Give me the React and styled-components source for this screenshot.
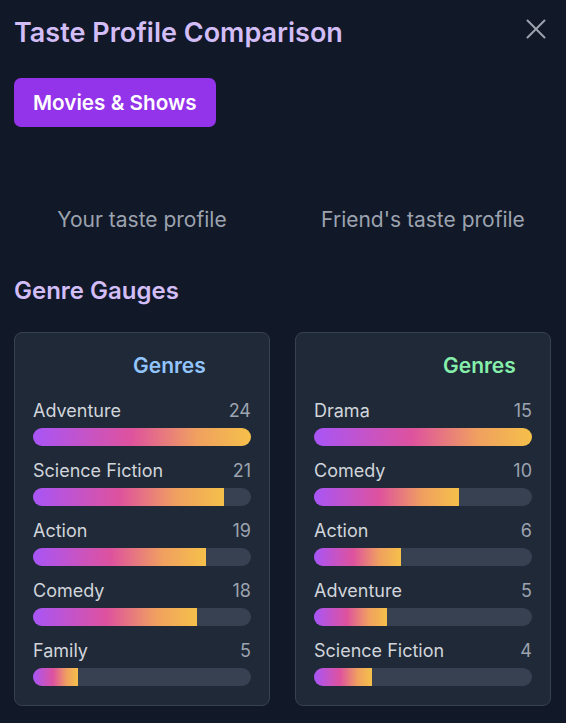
import React from "react";
import styled, { createGlobalStyle } from "styled-components";

const Global = createGlobalStyle`
  html, body { margin: 0; padding: 0; background: #111827; }
  body { font-family: Inter, "Noto Sans", sans-serif; -webkit-font-smoothing: antialiased; }
  * { box-sizing: border-box; }
`;

const Page = styled.div`
  width: 566px;
  min-height: 723px;
  background: #111827;
  padding: 16px 15px 18px 14px;
`;

const Header = styled.div`
  display: flex;
  justify-content: space-between;
  align-items: flex-start;
`;

const Title = styled.h1`
  margin: 0;
  font-size: 27px;
  line-height: 34px;
  font-weight: 600;
  color: #d2bdf7;
`;

const Close = styled.button`
  background: none;
  border: none;
  padding: 0;
  margin: 3px 5px 0 0;
  width: 20px;
  height: 20px;
  color: #9ca3af;
  cursor: pointer;
  display: flex;
`;

const Tab = styled.button`
  margin-top: 28px;
  height: 49px;
  padding: 0 19px;
  border: none;
  border-radius: 7px;
  background: #9333ea;
  color: #fff;
  font-family: inherit;
  font-size: 20.7px;
  font-weight: 600;
`;

const Columns = styled.div`
  display: grid;
  grid-template-columns: 1fr 1fr;
  column-gap: 25px;
`;

const ProfileRow = styled(Columns)`
  margin-top: 79px;
`;

const ProfileLabel = styled.div`
  text-align: center;
  font-size: 21px;
  line-height: 28px;
  color: #9ca3af;
`;

const SectionTitle = styled.h2`
  margin: 41px 0 0;
  font-size: 24px;
  line-height: 31px;
  font-weight: 600;
  color: #d2bdf7;
`;

const CardRow = styled(Columns)`
  margin-top: 26px;
`;

const Card = styled.div`
  background: #1f2937;
  border: 1px solid #364152;
  border-radius: 8px;
  padding: 18px 18px 19px;
  display: flex;
  flex-direction: column;
  gap: 14px;
`;

const CardTitle = styled.div`
  font-size: 21px;
  line-height: 30px;
  font-weight: 600;
  color: ${(p) => p.$color};
  padding-left: ${(p) => p.$offset}px;
  margin-bottom: 5px;
`;

const Row = styled.div`
  display: flex;
  flex-direction: column;
  gap: 7px;
`;

const RowHead = styled.div`
  display: flex;
  justify-content: space-between;
  font-size: 18px;
  line-height: 21px;
`;

const Label = styled.span`
  color: #d1d5db;
`;

const Count = styled.span`
  color: #9ca3af;
`;

const Track = styled.div`
  height: 18px;
  border-radius: 9px;
  background: #374151;
  overflow: hidden;
`;

const Fill = styled.div`
  height: 100%;
  background: linear-gradient(90deg, #a855f7 0%, #de529e 45%, #f0a060 75%, #f5c04a 100%);
`;

const mine = [
  ["Adventure", 24],
  ["Science Fiction", 21],
  ["Action", 19],
  ["Comedy", 18],
  ["Family", 5],
];

const friend = [
  ["Drama", 15],
  ["Comedy", 10],
  ["Action", 6],
  ["Adventure", 5],
  ["Science Fiction", 4],
];

function GenreCard({ data, color, offset }) {
  const max = Math.max(...data.map((d) => d[1]));
  return (
    <Card>
      <CardTitle $color={color} $offset={offset}>Genres</CardTitle>
      {data.map(([name, n]) => (
        <Row key={name}>
          <RowHead>
            <Label>{name}</Label>
            <Count>{n}</Count>
          </RowHead>
          <Track>
            <Fill style={{ width: `${(n / max) * 100}%` }} />
          </Track>
        </Row>
      ))}
    </Card>
  );
}

export default function App() {
  return (
    <Page>
      <Global />
      <Header>
        <Title>Taste Profile Comparison</Title>
        <Close aria-label="Close">
          <svg width="20" height="20" viewBox="0 0 20 20" fill="none" stroke="currentColor" strokeWidth="2" strokeLinecap="round">
            <path d="M1.5 1.5L18.5 18.5M18.5 1.5L1.5 18.5" />
          </svg>
        </Close>
      </Header>
      <Tab>Movies &amp; Shows</Tab>
      <ProfileRow>
        <ProfileLabel>Your taste profile</ProfileLabel>
        <ProfileLabel>Friend's taste profile</ProfileLabel>
      </ProfileRow>
      <SectionTitle>Genre Gauges</SectionTitle>
      <CardRow>
        <GenreCard data={mine} color="#93c5fd" offset={100} />
        <GenreCard data={friend} color="#86efac" offset={129} />
      </CardRow>
    </Page>
  );
}
